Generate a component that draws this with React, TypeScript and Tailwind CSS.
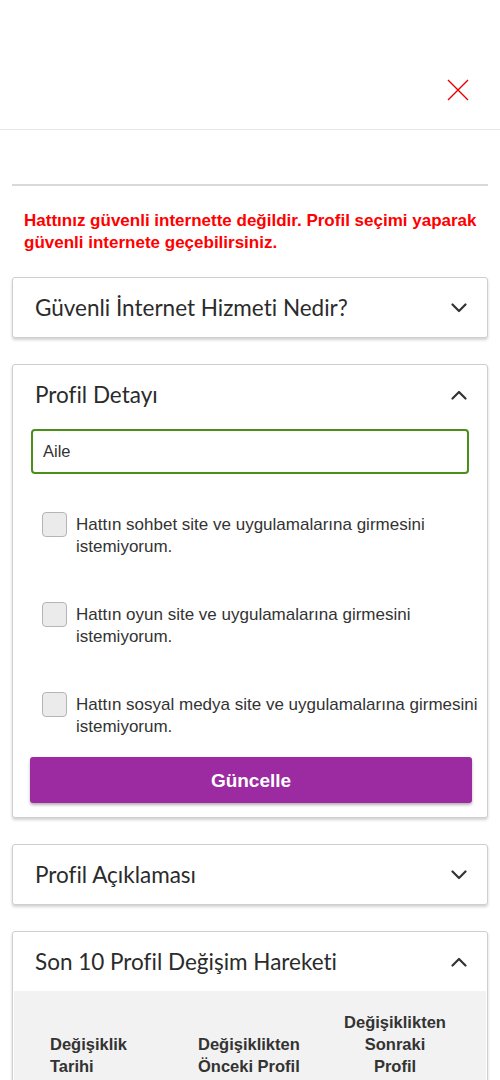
import React from "react";

const Chevron = ({ up }: { up?: boolean }) => (
  <svg width="16" height="10" viewBox="0 0 16 10" className="shrink-0">
    <path
      d={up ? "M1.5 8.5 L8 2 L14.5 8.5" : "M1.5 1.5 L8 8 L14.5 1.5"}
      fill="none"
      stroke="#333"
      strokeWidth="2.2"
      strokeLinecap="round"
      strokeLinejoin="round"
    />
  </svg>
);

const CardHeader = ({ title, up }: { title: string; up?: boolean }) => (
  <div className="flex items-center justify-between h-[59px] pl-[22px] pr-[20px]">
    <span className="text-[22.5px] text-[#2b2b2b] font-['Lato',sans-serif] [font-variant-ligatures:none]">{title}</span>
    <Chevron up={up} />
  </div>
);

const Check = ({ text }: { text: string }) => (
  <div className="flex items-start gap-[9px] pl-[29px] pr-[3px]">
    <div className="w-[25px] h-[25px] shrink-0 rounded-[4px] border border-[#b5b5b5] bg-[#ebebeb]" />
    <p className="text-[17px] leading-[22px] text-[#333] pt-[2px]">{text}</p>
  </div>
);

export default function App() {
  return (
    <div className="w-[500px] min-h-[1080px] bg-white font-['Liberation_Sans',Arial,sans-serif] overflow-hidden">
      <div className="h-[130px] border-b border-[#e6e6e6] flex items-start justify-end pr-[31px] pt-[79px]">
        <svg width="22" height="22" viewBox="0 0 22 22">
          <path d="M1 1 L21 21 M21 1 L1 21" stroke="#e60000" strokeWidth="1.4" />
        </svg>
      </div>
      <div className="px-[12px]">
        <div className="mt-[54px] h-[2px] bg-[#d9d9d9]" />
        <p className="mt-[24px] pl-[12px] pr-[6px] text-[17px] leading-[22px] font-bold text-[#ff0000]">
          Hattınız güvenli internette değildir. Profil seçimi yaparak güvenli internete geçebilirsiniz.
        </p>

        <div className="mt-[23px] rounded-[3px] border border-[#cfcfcf] shadow-[0_2px_3px_rgba(0,0,0,0.18)] bg-white">
          <CardHeader title="Güvenli İnternet Hizmeti Nedir?" />
        </div>

        <div className="mt-[26px] rounded-[3px] border border-[#cfcfcf] shadow-[0_2px_3px_rgba(0,0,0,0.18)] bg-white pb-[14px]">
          <CardHeader title="Profil Detayı" up />
          <div className="px-[18px]">
            <div className="mt-[5px] h-[45px] rounded-[4px] border-2 border-[#4a8f1a] flex items-center px-[10px] text-[16.5px] text-[#333]">
              Aile
            </div>
          </div>
          <div className="mt-[38px] flex flex-col gap-[44px]">
            <Check text="Hattın sohbet site ve uygulamalarına girmesini istemiyorum." />
            <Check text="Hattın oyun site ve uygulamalarına girmesini istemiyorum." />
            <Check text="Hattın sosyal medya site ve uygulamalarına girmesini istemiyorum." />
          </div>
          <div className="pl-[17px] pr-[15px] mt-[19px]">
            <div className="h-[46px] rounded-[3px] bg-[#9c2aa0] shadow-[0_2px_3px_rgba(0,0,0,0.3)] flex items-center justify-center pt-[2px] text-white font-bold text-[19px]">
              Güncelle
            </div>
          </div>
        </div>

        <div className="mt-[26px] rounded-[3px] border border-[#cfcfcf] shadow-[0_2px_3px_rgba(0,0,0,0.18)] bg-white">
          <CardHeader title="Profil Açıklaması" />
        </div>

        <div className="mt-[26px] rounded-[3px] border border-[#cfcfcf] shadow-[0_2px_3px_rgba(0,0,0,0.18)] bg-white">
          <CardHeader title="Son 10 Profil Değişim Hareketi" up />
          <div className="mx-[1px] bg-[#f2f2f2] pt-[20px] pb-[20px] grid grid-cols-[160px_140px_1fr] items-end text-[16.5px] leading-[22px] font-bold text-[#333]">
            <div className="pl-[36px]">Değişiklik<br />Tarihi</div>
            <div className="pl-[24px]">Değişiklikten<br />Önceki Profil</div>
            <div className="text-center pr-[10px]">Değişiklikten<br />Sonraki<br />Profil</div>
          </div>
        </div>
      </div>
    </div>
  );
}
